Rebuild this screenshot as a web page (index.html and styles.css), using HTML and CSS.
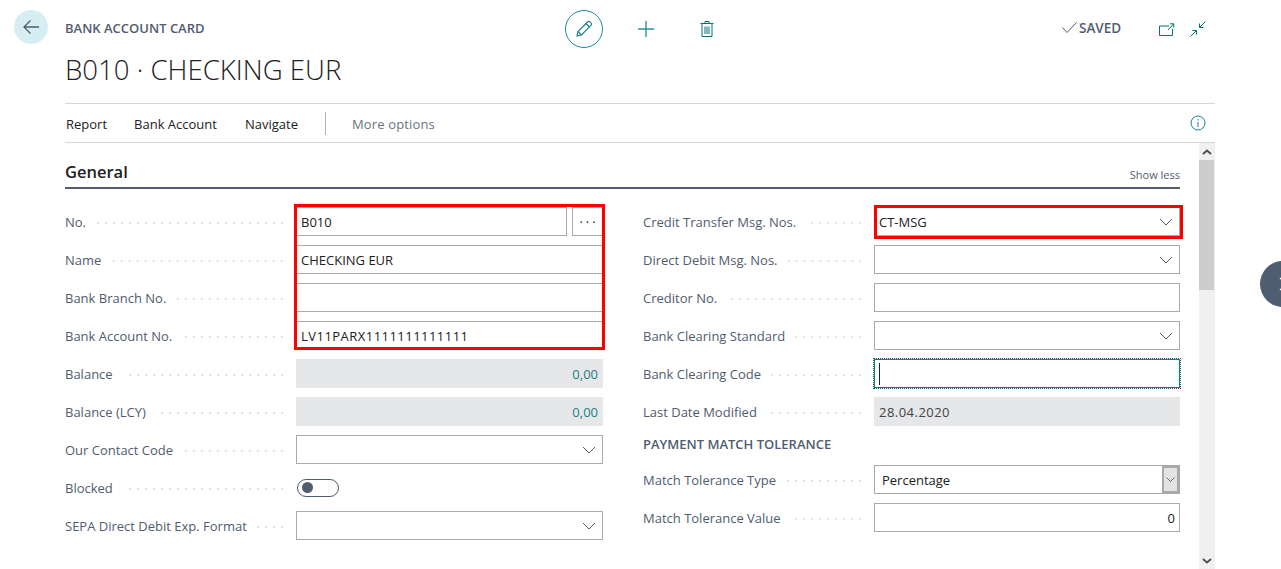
FILE: index.html
```html
<!DOCTYPE html>
<html lang="en">
<head>
    <meta charset="UTF-8">
    <meta name="viewport" content="width=device-width, initial-scale=1.0">
    <title>Bank Account Card</title>
    <link rel="stylesheet" href="styles.css">
</head>
<body>
    <div class="page">
        <!-- Back button -->
        <div class="back-col">
            <button class="back-btn" aria-label="Back">
                <svg width="18" height="16" viewBox="0 0 18 16" fill="none" stroke="#505c6f" stroke-width="1.3"><path d="M17 8H2M8.5 1.500 2 8l6.500 6.500"/></svg>
            </button>
        </div>

        <div class="main">
            <!-- Header -->
            <div class="top-row">
                <div class="caption">BANK ACCOUNT CARD</div>
                <button class="edit-btn" aria-label="Edit">
                    <svg width="18" height="18" viewBox="0 0 18 18" fill="none" stroke="#1b7f86" stroke-width="1.1"><path d="M2 16l1-4.500L12.500 2c.8-.8 1.800-.8 2.500-.1l1 1c.7.7.7 1.700-.1 2.500L6.500 15z"/><path d="M3 11.500 6.500 15M11 3.500l3.500 3.500"/></svg>
                </button>
                <svg class="plus-icon" width="16" height="16" viewBox="0 0 16 16" fill="none" stroke="#2f8f9c" stroke-width="1.400"><path d="M8 0v16M0 8h16"/></svg>
                <svg class="trash-icon" width="14" height="16" viewBox="0 0 14 16" fill="none" stroke="#00737a" stroke-width="1"><path d="M.5 2.500h13M5 2.500V.5h4v2M2 2.500V15.500h10V2.500M5 5.500v7.500M7 5.500v7.500M9 5.500v7.500"/></svg>
                <div class="saved">
                    <svg width="15" height="11" viewBox="0 0 15 11" fill="none" stroke="#505c6f" stroke-width="1"><path d="M.5 5.500l4.500 5L14.500.5"/></svg>
                    <span>SAVED</span>
                </div>
                <svg class="popout-icon" width="16" height="13" viewBox="0 0 16 13" fill="none" stroke="#00737a" stroke-width="1"><path d="M10 3H.5v9.500h13V6M9 7l5.500-6M11 .8h3.800v3.600"/></svg>
                <svg class="collapse-icon" width="16" height="16" viewBox="0 0 16 16" fill="none" stroke="#00737a" stroke-width="1"><path d="M15.500.5 9.500 6.500M9.500 2.500v4h4M.5 15.500l6-6M2.500 9.500h4v4"/></svg>
            </div>
            <h1 class="title">B010 · CHECKING EUR</h1>

            <!-- Action bar -->
            <div class="action-bar">
                <span class="action">Report</span>
                <span class="action">Bank Account</span>
                <span class="action">Navigate</span>
                <span class="action-sep"></span>
                <span class="action more">More options</span>
                <svg class="info-icon" width="16" height="16" viewBox="0 0 16 16" fill="none" stroke="#1b7f9c" stroke-width="1"><circle cx="8" cy="8" r="7"/><path d="M8 7v5M8 4.200v1.300"/></svg>
            </div>

            <div class="content">
                <div class="sheet">
                    <div class="section-head">
                        <h2>General</h2>
                        <span class="show-less">Show less</span>
                    </div>

                    <div class="columns">
                        <!-- Left column -->
                        <div class="column">
                            <div class="row">
                                <label class="label"><span>No.</span><i></i></label>
                                <div class="field-group">
                                    <div class="field">B010</div>
                                    <div class="more-btn">···</div>
                                </div>
                            </div>
                            <div class="row">
                                <label class="label"><span>Name</span><i></i></label>
                                <div class="field">CHECKING EUR</div>
                            </div>
                            <div class="row">
                                <label class="label"><span>Bank Branch No.</span><i></i></label>
                                <div class="field"></div>
                            </div>
                            <div class="row">
                                <label class="label"><span>Bank Account No.</span><i></i></label>
                                <div class="field digits">LV11PARX1111111111111</div>
                            </div>
                            <div class="row">
                                <label class="label"><span>Balance</span><i></i></label>
                                <div class="field readonly amount">0,00</div>
                            </div>
                            <div class="row">
                                <label class="label"><span>Balance (LCY)</span><i></i></label>
                                <div class="field readonly amount">0,00</div>
                            </div>
                            <div class="row">
                                <label class="label"><span>Our Contact Code</span><i></i></label>
                                <div class="field lookup"><svg class="chevron" width="14" height="8" viewBox="0 0 14 8"><path d="M1 1l6 6 6-6"/></svg></div>
                            </div>
                            <div class="row">
                                <label class="label"><span>Blocked</span><i></i></label>
                                <div class="toggle"><b></b></div>
                            </div>
                            <div class="row">
                                <label class="label"><span>SEPA Direct Debit Exp. Format</span><i></i></label>
                                <div class="field lookup"><svg class="chevron" width="14" height="8" viewBox="0 0 14 8"><path d="M1 1l6 6 6-6"/></svg></div>
                            </div>
                        </div>

                        <!-- Right column -->
                        <div class="column">
                            <div class="row">
                                <label class="label"><span>Credit Transfer Msg. Nos.</span><i></i></label>
                                <div class="field lookup">CT-MSG<svg class="chevron" width="14" height="8" viewBox="0 0 14 8"><path d="M1 1l6 6 6-6"/></svg></div>
                            </div>
                            <div class="row">
                                <label class="label"><span>Direct Debit Msg. Nos.</span><i></i></label>
                                <div class="field lookup"><svg class="chevron" width="14" height="8" viewBox="0 0 14 8"><path d="M1 1l6 6 6-6"/></svg></div>
                            </div>
                            <div class="row">
                                <label class="label"><span>Creditor No.</span><i></i></label>
                                <div class="field"></div>
                            </div>
                            <div class="row">
                                <label class="label"><span>Bank Clearing Standard</span><i></i></label>
                                <div class="field lookup"><svg class="chevron" width="14" height="8" viewBox="0 0 14 8"><path d="M1 1l6 6 6-6"/></svg></div>
                            </div>
                            <div class="row">
                                <label class="label"><span>Bank Clearing Code</span><i></i></label>
                                <div class="field focused"><span class="caret"></span></div>
                            </div>
                            <div class="row">
                                <label class="label plain"><span>Last Date Modified</span><i></i></label>
                                <div class="field readonly digits date">28.04.2020</div>
                            </div>
                            <h3 class="group-title">PAYMENT MATCH TOLERANCE</h3>
                            <div class="row">
                                <label class="label"><span>Match Tolerance Type</span><i></i></label>
                                <div class="field select">
                                    <span class="select-value">Percentage</span>
                                    <span class="select-btn"><svg width="9" height="5" viewBox="0 0 9 5" fill="none" stroke="#666" stroke-width="1"><path d="M.5.500l4 4 4-4"/></svg></span>
                                </div>
                            </div>
                            <div class="row">
                                <label class="label"><span>Match Tolerance Value</span><i></i></label>
                                <div class="field number">0</div>
                            </div>
                        </div>
                    </div>

                    <!-- Red marks drawn over the screenshot -->
                    <div class="mark mark-left"></div>
                    <div class="mark mark-right"></div>
                </div>

                <!-- Scrollbar -->
                <div class="scrollbar">
                    <div class="scroll-btn"><svg width="10" height="6" viewBox="0 0 10 6" fill="none" stroke="#505050" stroke-width="2"><path d="M1 5l4-3.500L9 5"/></svg></div>
                    <div class="scroll-thumb"></div>
                    <div class="scroll-track"></div>
                    <div class="scroll-btn"><svg width="10" height="6" viewBox="0 0 10 6" fill="none" stroke="#505050" stroke-width="2"><path d="M1 1l4 3.500L9 1"/></svg></div>
                </div>
            </div>
        </div>
    </div>

    <!-- Side panel handle, cut off by the window edge -->
    <div class="side-handle">
        <svg width="8" height="14" viewBox="0 0 8 14" fill="none" stroke="#fff" stroke-width="1.200"><path d="M1 1l6 6-6 6"/></svg>
    </div>
</body>
</html>
```

FILE: styles.css
```css
/* Basic Styles */
html, body {
    margin: 0;
    padding: 0;
    height: 569px;
    overflow: hidden;
    background-color: #fff;
}

body {
    font-family: "Open Sans", "Noto Sans", sans-serif;
    font-size: 13px;
    color: #212121;
    position: relative;
}

.page {
    display: flex;
    padding-left: 14px;
}

button {
    padding: 0;
    border: none;
    background: none;
    display: flex;
    align-items: center;
    justify-content: center;
}

.back-col {
    width: 51px;
    flex: none;
}

.back-btn {
    width: 34px;
    height: 34px;
    margin-top: 10px;
    border-radius: 50%;
    background-color: #d6eef1;
}

.main {
    width: 1150px;
    flex: none;
}

/* Header */
.top-row {
    display: flex;
    align-items: center;
    height: 38px;
    padding-top: 10px;
}

.caption {
    width: 500px;
    font-size: 13px;
    font-weight: 600;
    color: #505c6f;
    margin-top: -2px;
}

.edit-btn {
    width: 38px;
    height: 38px;
    box-sizing: border-box;
    border: 1px solid #1b8a92;
    border-radius: 50%;
}

.plus-icon {
    margin-left: 35px;
}

.trash-icon {
    margin-left: 46px;
}

.saved {
    display: flex;
    align-items: center;
    gap: 2px;
    margin-left: 348px;
    margin-top: -3px;
    font-size: 13.500px;
    font-weight: 600;
    color: #505c6f;
}

.popout-icon {
    margin-left: 38px;
}

.collapse-icon {
    margin-left: 15px;
}

.title {
    margin: 0;
    height: 56px;
    line-height: 42px;
    font-size: 27.600px;
    font-weight: 300;
    color: #212121;
    border-bottom: 1px solid #d5d5da;
    box-sizing: border-box;
}

/* Action Bar */
.action-bar {
    display: flex;
    align-items: center;
    height: 39px;
    box-sizing: border-box;
    border-bottom: 1px solid #d5d5da;
    padding: 1px 0 0 1px;
}

.action {
    margin-right: 27px;
}

.action:nth-child(2) {
    margin-right: 28px;
}

.action-sep {
    width: 1px;
    height: 23px;
    background-color: #b5b5b5;
    margin-right: 26px;
    margin-top: -1px;
}

.more {
    color: #6b7480;
    letter-spacing: .15px;
}

.info-icon {
    margin-left: auto;
    margin-right: 9px;
    margin-top: -2px;
}

/* Content */
.content {
    display: flex;
    height: 426px;
}

.sheet {
    width: 1115px;
    position: relative;
}

.section-head {
    display: flex;
    justify-content: space-between;
    align-items: flex-end;
    height: 46px;
    box-sizing: border-box;
    border-bottom: 2px solid #505c6f;
}

.section-head h2 {
    margin: 0;
    font-size: 16.500px;
    font-weight: 600;
    line-height: 30px;
}

.show-less {
    font-size: 11px;
    color: #505c6f;
    line-height: 24px;
}

.columns {
    display: grid;
    grid-template-columns: 538px 537px;
    column-gap: 40px;
    padding-top: 18px;
}

.row {
    display: flex;
    align-items: center;
    height: 29px;
    margin-bottom: 9px;
}

.label {
    display: flex;
    align-items: center;
    width: 231px;
    flex: none;
    padding-right: 13px;
    box-sizing: border-box;
    color: #505c6f;
}

.label span {
    white-space: nowrap;
}

/* dot leader after each label */
.label i {
    flex: 1;
    height: 2px;
    margin-left: 10px;
    margin-top: 2px;
    background-image: linear-gradient(to left, #e0e0e0 2px, transparent 2px);
    background-size: 8px 2px;
    background-position: right;
    background-repeat: repeat-x;
}

.field {
    flex: 1;
    height: 29px;
    box-sizing: border-box;
    display: flex;
    align-items: center;
    justify-content: space-between;
    padding: 0 4px;
    border: 1px solid #a9a9a9;
    color: #212121;
    white-space: nowrap;
}

.field-group {
    flex: 1;
    display: flex;
    gap: 5px;
}

.more-btn {
    width: 31px;
    height: 29px;
    box-sizing: border-box;
    border: 1px solid #a9a9a9;
    display: flex;
    align-items: center;
    justify-content: center;
    padding-left: 3px;
    letter-spacing: 3px;
}

.digits {
    letter-spacing: .47px;
}

.date {
    color: #444;
}

.lookup {
    padding-right: 6px;
}

.chevron {
    margin-left: auto;
    fill: none;
    stroke: #505c6f;
    stroke-width: 1;
}

.readonly {
    background-color: #e6e7e8;
    border-color: #e6e7e8;
}

.amount {
    justify-content: flex-end;
    color: #1b7f86;
}

.number {
    justify-content: flex-end;
}

.focused {
    border-color: #00838a;
    outline: 1px dotted #2a4a4e;
}

.caret {
    width: 1px;
    height: 22px;
    background-color: #212121;
}

.select {
    padding: 0;
    align-items: stretch;
}

.select-value {
    padding-left: 7px;
    align-self: center;
}

.select-btn {
    width: 17px;
    box-sizing: border-box;
    border: 2px solid #a9a9a9;
    background-color: #e3e3e3;
    display: flex;
    align-items: center;
    justify-content: center;
}

.toggle {
    width: 42px;
    height: 18px;
    margin-left: 1px;
    box-sizing: border-box;
    border: 1px solid #505c6f;
    border-radius: 9px;
    display: flex;
    align-items: center;
    padding-left: 4px;
}

.toggle b {
    width: 11px;
    height: 11px;
    border-radius: 50%;
    background-color: #505c6f;
}

.group-title {
    margin: 0 0 9px;
    height: 21px;
    line-height: 19px;
    font-size: 13px;
    font-weight: 600;
    color: #505c6f;
}

/* Red marks */
.mark {
    position: absolute;
    box-sizing: border-box;
    border: 3px solid #f00;
}

.mark-left {
    left: 229px;
    top: 61px;
    width: 311px;
    height: 146px;
}

.mark-right {
    left: 809px;
    top: 62px;
    width: 309px;
    height: 34px;
}

/* Scrollbar */
.scrollbar {
    width: 16px;
    margin-left: 19px;
    display: flex;
    flex-direction: column;
    background-color: #f0f0f0;
}

.scroll-btn {
    height: 17px;
    flex: none;
    display: flex;
    align-items: center;
    justify-content: center;
}

.scroll-thumb {
    height: 130px;
    width: 15px;
    flex: none;
    background-color: #cdcdcd;
}

.scroll-track {
    flex: 1;
}

/* Side handle */
.side-handle {
    position: absolute;
    left: 1260px;
    top: 261px;
    width: 46px;
    height: 46px;
    border-radius: 50%;
    background-color: #505c6f;
    display: flex;
    align-items: center;
    padding-left: 19px;
    box-sizing: border-box;
}
```
